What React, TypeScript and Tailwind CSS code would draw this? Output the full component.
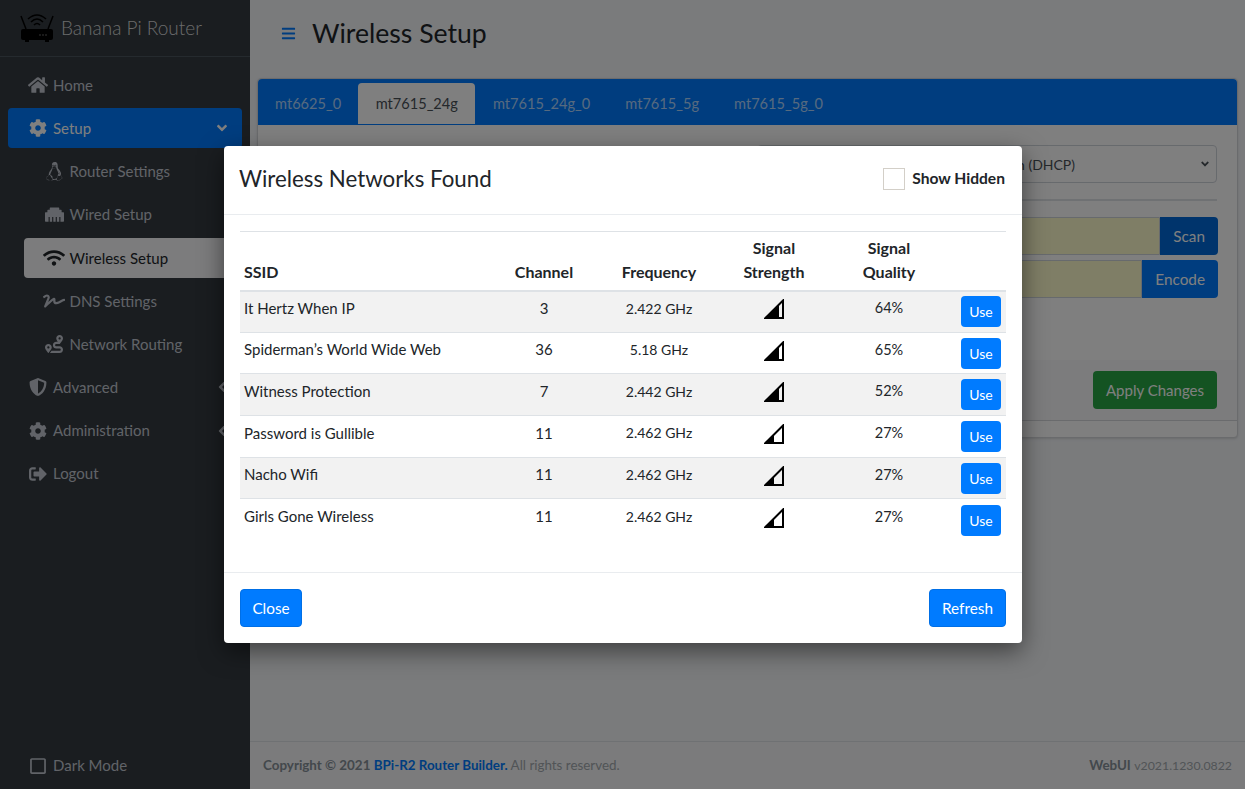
import React from "react";
import { FaHome, FaCog, FaLinux, FaEthernet, FaWifi, FaSignature, FaRoute, FaShieldAlt, FaSignOutAlt, FaAngleDown, FaAngleLeft, FaBars, FaRegSquare } from "react-icons/fa";

function Logo() {
  return (
    <svg width="34" height="32" viewBox="0 0 34 32" className="shrink-0">
      <rect x="1" y="17" width="32" height="11" rx="2" fill="#000" />
      <rect x="5" y="28" width="4" height="2" fill="#000" />
      <rect x="25" y="28" width="4" height="2" fill="#000" />
      <path d="M1 4 L6 17 M33 4 L28 17" stroke="#000" strokeWidth="1.5" />
      <path d="M8 7 Q17 -1 26 7 M11 10 Q17 4 23 10 M14 13 Q17 10 20 13" stroke="#000" strokeWidth="1.6" fill="none" />
      <circle cx="20" cy="23" r="0.8" fill="#777" /><circle cx="23" cy="23" r="0.8" fill="#777" /><circle cx="26" cy="23" r="0.8" fill="#777" />
    </svg>
  );
}

function Signal({ level }: { level: number }) {
  const x = level >= 50 ? 15 : 10;
  const y = 20 - x;
  return (
    <svg width="20" height="20" viewBox="0 0 20 20">
      <path d={`M0 20 L${x} 20 L${x} ${y} Z`} fill="#000" />
      <path d="M1.5 19 L19 19 L19 1.5 Z" fill="none" stroke="#000" strokeWidth="2" />
    </svg>
  );
}

function NavItem({ icon, label, active, sub, right }: { icon: React.ReactNode; label: string; active?: boolean; sub?: boolean; right?: React.ReactNode }) {
  return (
    <div className={`flex h-10 mb-[3.2px] items-center rounded ${sub ? "ml-4 pl-[19px]" : "pl-[19px]"} pr-3 ${active ? (sub ? "bg-[#f8f9fa] text-[#212529]" : "bg-[#007bff] text-white") : "text-[#c2c7d0]"}`}>
      <span className={`flex shrink-0 ${sub ? "w-[26.5px]" : "w-[26px]"}`}>
        <span className="flex w-[22px] justify-center">{icon}</span>
      </span>
      <span>{label}</span>
      {right && <span className="ml-auto text-[16px]">{right}</span>}
    </div>
  );
}

const nets = [
  ["It Hertz When IP", "3", "2.422 GHz", 64],
  ["Spiderman’s World Wide Web", "36", "5.18 GHz", 65],
  ["Witness Protection", "7", "2.442 GHz", 52],
  ["Password is Gullible", "11", "2.462 GHz", 27],
  ["Nacho Wifi", "11", "2.462 GHz", 27],
  ["Girls Gone Wireless", "11", "2.462 GHz", 27],
] as const;

export default function App() {
  return (
    <div className="relative flex h-[789px] w-[1245px] overflow-hidden bg-[#f4f6f9] text-[15px] text-[#212529] [font-family:'Lato','Liberation_Sans',sans-serif]">
      <aside className="flex w-[250px] shrink-0 flex-col bg-[#343a40]">
        <div className="flex h-[57px] items-center gap-[7px] border-b border-[#4b545c] pl-5 pr-2">
          <Logo />
          <span className="text-[19px] font-light text-[#ffffffcc]">Banana Pi Router</span>
        </div>
        <nav className="flex flex-col px-2 pt-2">
          <NavItem icon={<FaHome className="text-[20px]" />} label="Home" />
          <NavItem icon={<FaCog className="text-[18px]" />} label="Setup" active right={<FaAngleDown />} />
          <NavItem sub icon={<FaLinux className="text-[19px]" />} label="Router Settings" />
          <NavItem sub icon={<FaEthernet className="text-[19px]" />} label="Wired Setup" />
          <NavItem sub active icon={<FaWifi className="text-[22px]" />} label="Wireless Setup" />
          <NavItem sub icon={<FaSignature className="text-[22px]" />} label="DNS Settings" />
          <NavItem sub icon={<FaRoute className="text-[18px]" />} label="Network Routing" />
          <NavItem icon={<FaShieldAlt className="text-[18px]" />} label="Advanced" right={<FaAngleLeft />} />
          <NavItem icon={<FaCog className="text-[18px]" />} label="Administration" right={<FaAngleLeft />} />
          <NavItem icon={<FaSignOutAlt className="text-[18px]" />} label="Logout" />
        </nav>
        <div className="mt-auto flex h-[47px] items-center pl-[29px] text-[#c2c7d0]">
          <FaRegSquare className="text-[18px]" />
          <span className="ml-[6px]">Dark Mode</span>
        </div>
      </aside>

      <main className="flex min-w-0 flex-1 flex-col">
        <div className="flex h-[78px] items-center pb-[11px] pl-[31px]">
          <FaBars className="text-[15px] text-[#007bff]" />
          <h1 className="ml-[16px] text-[26.6px] font-normal">Wireless Setup</h1>
        </div>
        <div className="ml-[7px] mr-[7px] rounded border border-[#d5d7da] bg-white pb-4 shadow-sm">
          <div className="flex h-[45px] items-end rounded-t bg-[#007bff] text-[14.6px]">
            <span className="flex h-[41px] items-center px-[17px] text-[#ffffffb0]">mt6625_0</span>
            <span className="flex h-[41px] items-center rounded-t bg-white px-[17.5px] text-[#495057]">mt7615_24g</span>
            <span className="flex h-[41px] items-center px-[17.5px] text-[#ffffffb0]">mt7615_24g_0</span>
            <span className="flex h-[41px] items-center px-[17.5px] text-[#ffffffb0]">mt7615_5g</span>
            <span className="flex h-[41px] items-center px-[17.5px] text-[#ffffffb0]">mt7615_5g_0</span>
          </div>
          <div className="border-t border-[#007bff] pl-5 pr-5 pt-5">
            <div className="ml-auto flex h-[38px] w-[460px] items-center justify-end rounded border border-[#ced4da] pr-[5px] text-[14px] text-[#495057]">
              <span className="mr-[124px]">Automatic Configuration (DHCP)</span><FaAngleDown className="text-[12px]" />
            </div>
            <div className="my-4 h-[2px] bg-[#dee2e6]" />
            <div className="-mr-px flex h-[38px] justify-end">
              <div className="w-[400px] rounded-l border border-[#ced4da] bg-[#fefccc]" />
              <span className="flex items-center rounded-r bg-[#0069d9] px-[13px] text-[15.3px] text-white">Scan</span>
            </div>
            <div className="-mr-px mt-[5px] flex h-[38px] justify-end">
              <div className="w-[400px] rounded-l border border-[#ced4da] bg-[#fefccc]" />
              <span className="flex items-center rounded-r bg-[#007bff] px-[13px] text-[15.3px] text-white">Encode</span>
            </div>
          </div>
          <div className="mt-[62px] flex h-[61px] items-center justify-end border-b border-[#d5d7da] bg-[#f8f9fa] pr-5">
            <span className="flex h-[38px] items-center rounded bg-[#28a745] px-[13px] text-[15px] text-white">Apply Changes</span>
          </div>
        </div>
        <footer className="mt-auto flex h-[48px] items-center justify-between border-t border-[#dee2e6] bg-[#f6f7f8] px-[13px] text-[13.4px] text-[#a3a9ae]">
          <span><b className="text-[#869099]">Copyright © 2021 <span className="text-[#007bff]">BPi-R2 Router Builder.</span></b> All rights reserved.</span>
          <span><b className="text-[#869099]">WebUI</b> <span className="text-[12.3px]">v2021.1230.0822</span></span>
        </footer>
      </main>

      <div className="absolute inset-0 bg-black/50" />

      <div className="absolute left-[224px] top-[146px] w-[798px] rounded bg-white shadow-[0_8px_24px_rgba(0,0,0,0.5)]">
        <div className="flex h-[69px] items-center justify-between border-b border-[#e9ecef] pb-[2px] pl-[15px] pr-[17px]">
          <h4 className="text-[22.3px] font-normal">Wireless Networks Found</h4>
          <div className="flex items-center gap-[7px]">
            <span className="h-[22px] w-[22px] border border-[#d3cfc8] bg-white" />
            <b className="text-[15.6px]">Show Hidden</b>
          </div>
        </div>
        <div className="px-4 pt-4">
          <table className="w-[766px] table-fixed border-collapse text-[15px]">
            <colgroup>
              <col className="w-[245px]" /><col className="w-[118px]" /><col className="w-[112px]" /><col className="w-[118px]" /><col className="w-[112px]" /><col className="w-[61px]" />
            </colgroup>
            <thead>
              <tr className="h-[59px] border-y border-[#dee2e6] border-b-2 align-bottom text-[16px] font-bold leading-6">
                <th className="px-1 pb-[6px] text-left">SSID</th>
                <th className="pb-[6px]">Channel</th>
                <th className="pb-[6px]">Frequency</th>
                <th className="pb-[6px]">Signal<br />Strength</th>
                <th className="pb-[6px]">Signal<br />Quality</th>
                <th />
              </tr>
            </thead>
            <tbody>
              {nets.map(([ssid, ch, f, q], i) => (
                <tr key={ssid} className={`h-[41.7px] ${i < 5 ? "border-b border-[#dee2e6]" : ""} ${i % 2 === 0 ? "bg-[#f2f2f2]" : ""}`}>
                  <td className="px-1 pb-[7px]">{ssid}</td>
                  <td className="pb-[7px] text-center">{ch}</td>
                  <td className="pb-[7px] text-center text-[14px]">{f}</td>
                  <td className="pb-[5px] text-center"><span className="flex justify-center"><Signal level={q} /></span></td>
                  <td className="pb-[7px] text-center text-[14.5px]">{q}%</td>
                  <td className="pr-[5px] text-right">
                    <span className="inline-flex h-[31px] w-[40px] items-center justify-center rounded bg-[#007bff] text-[14px] text-white">Use</span>
                  </td>
                </tr>
              ))}
            </tbody>
          </table>
        </div>
        <div className="mt-[31px] flex h-[71px] items-center justify-between border-t border-[#e9ecef] px-4">
          <span className="flex h-[38px] w-[62px] items-center justify-center rounded border border-[#006fe6] bg-[#007bff] pt-px text-[15.3px] text-white">Close</span>
          <span className="flex h-[38px] w-[77px] items-center justify-center rounded border border-[#006fe6] bg-[#007bff] pt-px text-[15.3px] text-white">Refresh</span>
        </div>
      </div>
    </div>
  );
}
